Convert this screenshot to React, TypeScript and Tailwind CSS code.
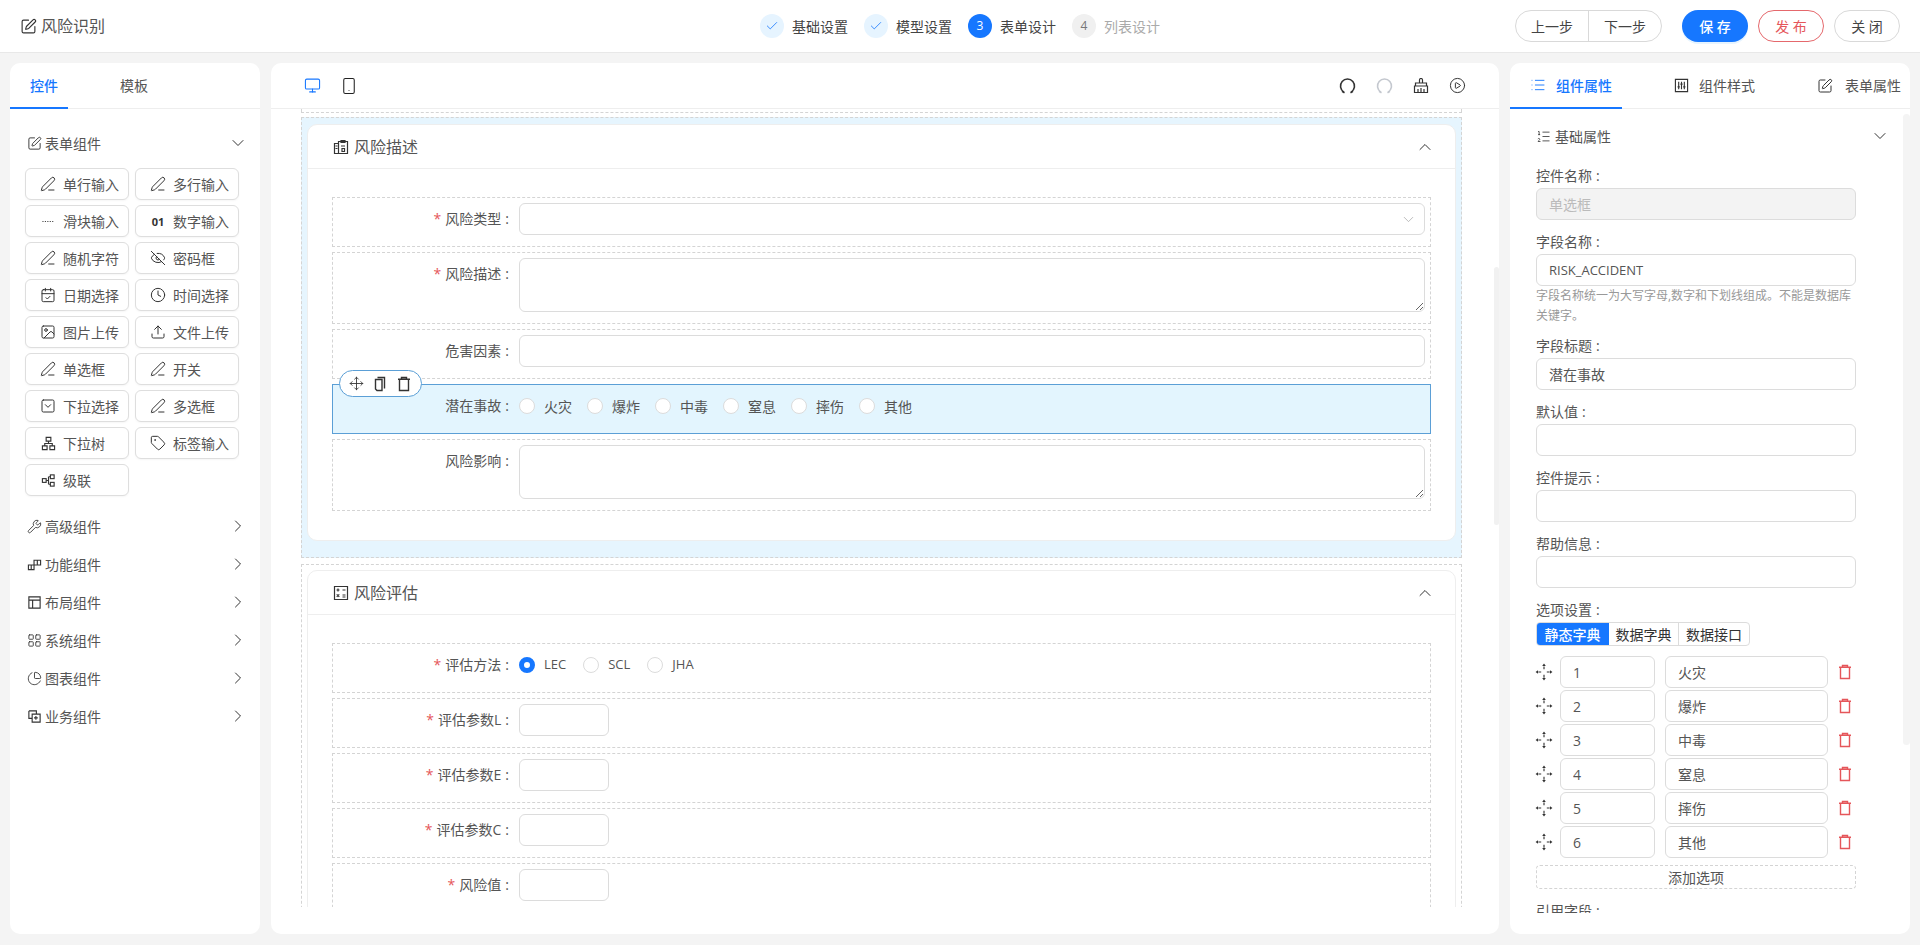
import React from 'react';
import {
  CalendarCheck, Check, ChevronDown, ChevronRight, ChevronUp, CirclePlay, Clock, EyeOff, Image, LayoutGrid,
  List, ListOrdered, Monitor, Move, PenLine, ChartPie, Smartphone, SquareChevronDown, SquarePen, Tag, Upload, Wrench,
} from 'lucide-react';

const font = 'font-["Open_Sans","Noto_Sans_CJK_SC",sans-serif]';

function Svg({ children, size = 16, className = '' }: { children: React.ReactNode; size?: number; className?: string }) {
  return (
    <svg width={size} height={size} viewBox="0 0 16 16" fill="none" stroke="currentColor" strokeWidth="1.2" className={className}>
      {children}
    </svg>
  );
}

const SliderDots = () => (
  <Svg size={15}>
    <path d="M1.5 8h13" strokeDasharray="1.2 1.4" strokeWidth="1" />
  </Svg>
);
const Zero1 = () => <span className="text-[11px] font-bold leading-none text-[#333]">01</span>;
const Cascade = () => (
  <Svg size={15}>
    <rect x="1.5" y="6" width="4" height="4" />
    <rect x="10" y="2" width="4" height="4" />
    <rect x="10" y="10" width="4" height="4" />
    <path d="M5.5 8H8M8 4v8M8 4h2M8 12h2" />
  </Svg>
);
const Tree = () => (
  <Svg size={15}>
    <path d="M5.5 1.5h5v4h-5zM1.5 10.5h5v4h-5zM9.5 10.5h5v4h-5zM8 5.5V8M4 10.5V8h8v2.5" />
  </Svg>
);
const Func = () => (
  <Svg size={15}>
    <path d="M1.5 8.5h6v5h-6zM7.5 8.5V3.5h7v5h-7zM4.5 8.5v5M11 3.5v5" />
  </Svg>
);
const Layout = () => (
  <Svg size={15}>
    <path d="M2 2h12v12H2zM2 5.5h12M6 5.5V14" />
  </Svg>
);
const Business = () => (
  <Svg size={15}>
    <path d="M2 2h8v3M2 2v8h3M5.5 5.5H14V14H5.5zM7.5 9.5h4M9.5 7.5v4" />
  </Svg>
);
const ClipboardBuild = () => (
  <Svg size={16}>
    <path d="M1.5 4.5h4v10h-4zM5.5 2.5h9v12h-9zM8 1.5h4v2H8zM2.5 7h2M2.5 9.5h2M8 7h4M9 9.5h2.5v3H9z" />
  </Svg>
);
const CalcSquare = () => (
  <Svg size={16}>
    <path d="M1.5 1.5h13v13h-13zM3.5 5h3M5 3.5v3M9.5 5h3M9.5 10h3M9.5 12h3M3.7 9.3l2.6 2.6M6.3 9.3l-2.6 2.6" />
  </Svg>
);
const SliderSquare = () => (
  <Svg size={15}>
    <path d="M1.5 1.5h13v13h-13zM5 4v8M8 4v8M11 4v8M3.8 9.5h2.4M6.8 6.5h2.4M9.8 9.5h2.4" />
  </Svg>
);
const DragDots = () => (
  <svg width="18" height="18" viewBox="0 0 16 16" fill="#333">
    <path d="M8 0.5l1.6 2.2H6.4zM8 15.5l-1.6-2.2h3.2zM0.5 8l2.2-1.6v3.2zM15.5 8l-2.2 1.6V6.4z" />
    <path d="M8 3v2.5M8 10.5V13M3 8h2.5M10.5 8H13" stroke="#333" strokeWidth="1" />
  </svg>
);
const Undo = ({ className = '' }: { className?: string }) => (
  <Svg size={17} className={className}>
    <path d="M4.6 14.2A6.6 6.6 0 1 1 11.4 14.2" strokeWidth="1.5" />
    <path d="M2.8 13.4l2.4 1.4M13.2 13.4l-2.4 1.4" strokeWidth="1.5" />
  </Svg>
);
const Broom = () => (
  <Svg size={16}>
    <path d="M6.5 4.5V2a1.5 1.5 0 0 1 3 0v2.5M2.5 8V5h11v3M1.5 8h13v6.5h-13zM5 11v3.5M8 10v4.5M11 11v3.5" />
  </Svg>
);
const Bin = ({ className = '' }: { className?: string }) => (
  <Svg size={16} className={className}>
    <path d="M5.5 3V1.5h5V3M2 3.2h12M3.5 3.2v11.3h9V3.2" strokeWidth="1.4" />
  </Svg>
);
const Pages = () => (
  <Svg size={16}>
    <path d="M5.5 1.5h7v11M3.5 3.5h6.5v11H5l-1.5-1.5z" strokeWidth="1.4" />
  </Svg>
);

const pen = <PenLine size={16} strokeWidth={1.5} />;
const widgets: [string, React.ReactNode][] = [
  ['单行输入', pen],
  ['多行输入', pen],
  ['滑块输入', <SliderDots />],
  ['数字输入', <Zero1 />],
  ['随机字符', pen],
  ['密码框', <EyeOff size={16} strokeWidth={1.5} />],
  ['日期选择', <CalendarCheck size={16} strokeWidth={1.5} />],
  ['时间选择', <Clock size={16} strokeWidth={1.5} />],
  ['图片上传', <Image size={16} strokeWidth={1.5} />],
  ['文件上传', <Upload size={16} strokeWidth={1.5} />],
  ['单选框', pen],
  ['开关', pen],
  ['下拉选择', <SquareChevronDown size={16} strokeWidth={1.5} />],
  ['多选框', pen],
  ['下拉树', <Tree />],
  ['标签输入', <Tag size={16} strokeWidth={1.5} />],
  ['级联', <Cascade />],
];

const groups: [string, React.ReactNode][] = [
  ['高级组件', <Wrench size={15} strokeWidth={1.4} />],
  ['功能组件', <Func />],
  ['布局组件', <Layout />],
  ['系统组件', <LayoutGrid size={15} strokeWidth={1.4} />],
  ['图表组件', <ChartPie size={15} strokeWidth={1.4} />],
  ['业务组件', <Business />],
];

function Header() {
  const steps = [
    { label: '基础设置', done: true },
    { label: '模型设置', done: true },
    { label: '表单设计', n: 3, active: true },
    { label: '列表设计', n: 4 },
  ];
  return (
    <header className="grid h-[53px] shrink-0 grid-cols-[1fr_auto_1fr] items-center border-b border-[#e8e8e8] bg-white pl-[20px] pr-[20px]">
      <div className="flex items-center gap-[4px] text-[16px] text-[#555]">
        <SquarePen size={17} strokeWidth={1.6} className="text-[#333]" />
        风险识别
      </div>
      <div className="flex gap-[16px]">
        {steps.map((s) => (
          <div key={s.label} className="flex items-center gap-[8px] text-[14px]">
            <span
              className={
                s.done
                  ? 'flex h-[24px] w-[24px] items-center justify-center rounded-full bg-[#e6f4ff] text-[#1677ff]'
                  : s.active
                    ? 'flex h-[24px] w-[24px] items-center justify-center rounded-full bg-[#1677ff] text-[12px] text-white'
                    : 'flex h-[24px] w-[24px] items-center justify-center rounded-full bg-[#f0f0f0] text-[12px] text-[#777]'
              }
            >
              {s.done ? <Check size={14} strokeWidth={1.4} /> : s.n}
            </span>
            <span className={s.n === 4 ? 'text-[#aaa]' : 'text-[#444]'}>{s.label}</span>
          </div>
        ))}
      </div>
      <div className="flex items-center justify-end text-[14px] [word-spacing:3px]">
        <div className="mr-[20px] flex h-[32px] items-center rounded-full border border-[#d9d9d9] text-[#444]">
          <span className="flex h-full w-[73px] items-center justify-center border-r border-[#d9d9d9]">上一步</span>
          <span className="flex h-full w-[72px] items-center justify-center">下一步</span>
        </div>
        <button className="mr-[10px] h-[32px] w-[66px] rounded-full bg-[#1677ff] font-medium text-white shadow-[0_2px_0_rgba(5,145,255,0.1)]">保 存</button>
        <button className="mr-[10px] h-[32px] w-[66px] rounded-full border border-[#e5686c] text-[#e5565a]">发 布</button>
        <button className="h-[32px] w-[66px] rounded-full border border-[#d9d9d9] text-[#444]">关 闭</button>
      </div>
    </header>
  );
}

function LeftPanel() {
  return (
    <aside className="flex w-[250px] shrink-0 flex-col rounded-[10px] bg-white text-[14px] text-[#555]">
      <div className="flex h-[46px] shrink-0 border-b border-[#eeeeee]">
        <div className="-mb-px flex w-[58px] items-center border-b-[2px] border-[#1677ff] pl-[20px] font-medium text-[#1677ff]">控件</div>
        <div className="ml-[32px] flex w-[68px] items-center justify-center">模板</div>
      </div>
      <div className="px-[15px] pt-[15px]">
        <div className="mb-[6px] flex h-[38px] items-center gap-[3px] pl-[2px]">
          <SquarePen size={15} strokeWidth={1.5} className="text-[#333]" />
          <span className="flex-1">表单组件</span>
          <ChevronDown size={20} strokeWidth={1.2} className="-mr-[3px] text-[#333]" />
        </div>
        <div className="grid grid-cols-[104px_104px] gap-x-[6px] gap-y-[5px]">
          {widgets.map(([label, icon]) => (
            <div key={label} className="flex h-[32px] items-center rounded-[6px] border border-[#dedede] bg-white pl-[14px] shadow-[0_1px_2px_rgba(0,0,0,0.04)]">
              <span className="mr-[7px] flex w-[16px] justify-center text-[#333]">{icon}</span>
              {label}
            </div>
          ))}
        </div>
        <div className="mt-[11px]">
          {groups.map(([label, icon]) => (
            <div key={label} className="flex h-[38px] items-center gap-[3px] pl-[1px]">
              <span className="flex w-[16px] justify-center text-[#333]">{icon}</span>
              <span className="flex-1">{label}</span>
              <ChevronRight size={20} strokeWidth={1.2} className="-mr-[3px] text-[#333]" />
            </div>
          ))}
        </div>
      </div>
    </aside>
  );
}

function Radio({ label, checked, latin }: { label: string; checked?: boolean; latin?: boolean }) {
  return (
    <span className="flex items-center gap-[9px]">
      <span className={checked ? 'h-[16px] w-[16px] rounded-full border-[5px] border-[#1677ff] bg-white' : 'h-[16px] w-[16px] rounded-full border border-[#dcdcdc] bg-white'} />
      <span className={latin ? 'text-[13px] text-[#555]' : 'text-[14px] text-[#555]'}>{label}</span>
    </span>
  );
}

function Row({ label, required, selected, children }: { label: string; required?: boolean; selected?: boolean; children: React.ReactNode }) {
  return (
    <div className={selected ? 'relative mb-[5px] flex border border-[#5b9fd6] bg-[#e3f5fe] pb-[11px] pt-[5px]' : 'mb-[5px] flex border border-dashed border-[#d4d4d4] pb-[11px] pt-[5px]'}>
      <div className="w-[176px] shrink-0 text-right text-[14px] leading-[32px] text-[#555]">
        {required && <span className="mr-[4px] text-[#e5565a]">*</span>}
        {label}
        <span className="ml-[4px]">:</span>
      </div>
      <div className="ml-[10px] mr-[5px] min-w-0 flex-1">{children}</div>
      {selected && (
        <div className="absolute left-[6px] top-[-15px] flex h-[27px] w-[83px] items-center justify-center gap-[8px] rounded-full border border-[#5b9fd6] bg-white text-[#333]">
          <Move size={15} strokeWidth={1.4} />
          <Pages />
          <Bin />
        </div>
      )}
    </div>
  );
}

const boxClass = 'block h-[32px] w-full rounded-[6px] border border-[#dcdcdc] bg-white px-[12px] text-[14px] text-[#555] outline-none';

function Area() {
  return <textarea readOnly className="block h-[54px] w-full rounded-[6px] border border-[#dcdcdc] bg-white outline-none" />;
}

function Section({ title, icon, selected, children }: { title: string; icon: React.ReactNode; selected?: boolean; children: React.ReactNode }) {
  return (
    <section className={selected ? 'mb-[6px] border border-dashed border-[#d4d4d4] bg-[#e6f5fe] px-[5px] pb-[16px] pt-[6px]' : 'border border-dashed border-[#d4d4d4] px-[5px] pt-[5px]'}>
      <div className="rounded-[10px] border border-[#eeeeee] bg-white">
        <div className="flex h-[44px] items-center gap-[5px] border-b border-[#eeeeee] pl-[25px] pr-[20px] text-[16px] text-[#555]">
          <span className="text-[#333]">{icon}</span>
          <span className="flex-1">{title}</span>
          <ChevronUp size={20} strokeWidth={1.2} className="text-[#333]" />
        </div>
        <div className="px-[24px] pb-[24px] pt-[28px]">{children}</div>
      </div>
    </section>
  );
}

function CenterPanel() {
  return (
    <main className="relative flex w-[1228px] shrink-0 flex-col rounded-[10px] bg-white">
      <div className="flex h-[46px] shrink-0 items-center border-b border-[#eeeeee] pl-[33px] pr-[33px]">
        <Monitor size={17} strokeWidth={1.5} className="text-[#1677ff]" />
        <Smartphone size={18} strokeWidth={1.4} className="ml-[19px] text-[#222]" />
        <div className="ml-auto flex items-center gap-[20px] text-[#333]">
          <Undo />
          <Undo className="text-[#c4c8cf]" />
          <Broom />
          <CirclePlay size={17} strokeWidth={1.4} />
        </div>
      </div>
      <div className="h-[798px] overflow-hidden pl-[30px] pr-[37px]">
        <div className="mb-[4px] h-[4px] border-x border-b border-dashed border-[#d4d4d4]" />
        <Section title="风险描述" icon={<ClipboardBuild />} selected>
          <Row label="风险类型" required>
            <div className="relative">
              <input readOnly className={boxClass} />
              <ChevronDown size={17} strokeWidth={1.1} className="absolute right-[8px] top-[8px] text-[#aaa]" />
            </div>
          </Row>
          <Row label="风险描述" required><Area /></Row>
          <Row label="危害因素"><input readOnly className={boxClass} /></Row>
          <Row label="潜在事故" selected>
            <div className="flex h-[32px] items-center gap-[15px]">
              {['火灾', '爆炸', '中毒', '窒息', '摔伤', '其他'].map((o) => <Radio key={o} label={o} />)}
            </div>
          </Row>
          <Row label="风险影响"><Area /></Row>
        </Section>
        <Section title="风险评估" icon={<CalcSquare />}>
          <Row label="评估方法" required>
            <div className="flex h-[32px] items-center gap-[17px]">
              <Radio label="LEC" checked latin />
              <Radio label="SCL" latin />
              <Radio label="JHA" latin />
            </div>
          </Row>
          {['评估参数L', '评估参数E', '评估参数C', '风险值'].map((l) => (
            <Row key={l} label={l} required>
              <input readOnly className={`${boxClass} !w-[90px]`} />
            </Row>
          ))}
        </Section>
      </div>
      <div className="absolute left-[1223px] top-[204px] h-[258px] w-[5px] rounded-full bg-[#f1f1f1]" />
    </main>
  );
}

function Field({ label, value, disabled, help, latin }: { label: string; value?: string; disabled?: boolean; help?: string; latin?: boolean }) {
  return (
    <div>
      <div className="h-[34px] pt-[11px] text-[14px] leading-[22px] text-[#555]">
        {label}
        <span className="ml-[4px]">:</span>
      </div>
      <input
        readOnly
        value={value ?? ''}
        className={disabled ? 'block h-[32px] w-full rounded-[6px] border border-[#dcdcdc] bg-[#f3f3f3] px-[12px] text-[14px] text-[#bbb] outline-none' : `${boxClass} ${latin ? '!text-[13px]' : ''}`}
      />
      {help && <div className="h-[38px] text-[12px] leading-[20px] text-[#999]">{help}</div>}
    </div>
  );
}

function RightPanel() {
  const options = ['火灾', '爆炸', '中毒', '窒息', '摔伤', '其他'];
  return (
    <aside className="relative flex w-[400px] shrink-0 flex-col rounded-[10px] bg-white text-[14px] text-[#555]">
      <div className="flex h-[46px] shrink-0 items-center border-b border-[#eeeeee]">
        <div className="-mb-px flex h-[46px] w-[112px] items-center gap-[10px] border-b-[2px] border-[#1677ff] pl-[20px] font-medium text-[#1677ff]">
          <List size={16} strokeWidth={1.4} />
          组件属性
        </div>
        <div className="ml-[52px] flex items-center gap-[10px] whitespace-nowrap">
          <span className="text-[#333]"><SliderSquare /></span>
          组件样式
        </div>
        <div className="ml-[62px] flex items-center gap-[12px] whitespace-nowrap">
          <SquarePen size={16} strokeWidth={1.5} className="text-[#333]" />
          表单属性
        </div>
      </div>
      <div className="h-[804px] overflow-hidden pl-[26px] pt-[10px]">
        <div className="w-[320px]">
          <div className="mb-[1px] flex h-[34px] items-center gap-[4px]">
            <ListOrdered size={15} strokeWidth={1.3} className="text-[#333]" />
            <span className="flex-1">基础属性</span>
            <ChevronDown size={20} strokeWidth={1.2} className="-mr-[34px] text-[#333]" />
          </div>
          <Field label="控件名称" value="单选框" disabled />
          <Field label="字段名称" value="RISK_ACCIDENT" latin help="字段名称统一为大写字母,数字和下划线组成。不能是数据库关键字。" />
          <Field label="字段标题" value="潜在事故" />
          <Field label="默认值" />
          <Field label="控件提示" />
          <Field label="帮助信息" />
          <div className="h-[34px] pt-[11px] leading-[22px]">选项设置<span className="ml-[4px]">:</span></div>
          <div className="flex h-[24px] w-[214px] overflow-hidden rounded-[4px] border border-[#dcdcdc] text-[#333]">
            <span className="-my-px -ml-px flex w-[73px] items-center justify-center bg-[#1677ff] font-medium text-white">静态字典</span>
            <span className="flex w-[70px] items-center justify-center border-r border-[#dcdcdc]">数据字典</span>
            <span className="flex flex-1 items-center justify-center">数据接口</span>
          </div>
          <div className="mt-[10px] flex flex-col gap-[2px]">
            {options.map((o, i) => (
              <div key={o} className="flex h-[32px] items-center">
                <span className="mr-[6px] -ml-[1px] w-[19px]"><DragDots /></span>
                <input readOnly value={i + 1} className={`${boxClass} !w-[95px]`} />
                <input readOnly value={o} className={`${boxClass} ml-[10px] !w-[163px]`} />
                <Bin className="ml-[9px] text-[#e5565a]" />
              </div>
            ))}
          </div>
          <div className="mt-[7px] flex h-[24px] items-center justify-center rounded-[4px] border border-dashed border-[#d4d4d4]">添加选项</div>
          <div className="h-[34px] pt-[11px] leading-[22px]">引用字段<span className="ml-[4px]">:</span></div>
        </div>
      </div>
      <div className="absolute right-0 top-[51px] h-[631px] w-[7px] rounded-full bg-[#f4f4f4]" />
    </aside>
  );
}

export default function App() {
  return (
    <div className={`flex h-screen flex-col overflow-hidden bg-[#f4f4f4] ${font}`}>
      <Header />
      <div className="flex min-h-0 flex-1 gap-[11px] px-[10px] pb-[11px] pt-[10px]">
        <LeftPanel />
        <CenterPanel />
        <RightPanel />
      </div>
    </div>
  );
}
